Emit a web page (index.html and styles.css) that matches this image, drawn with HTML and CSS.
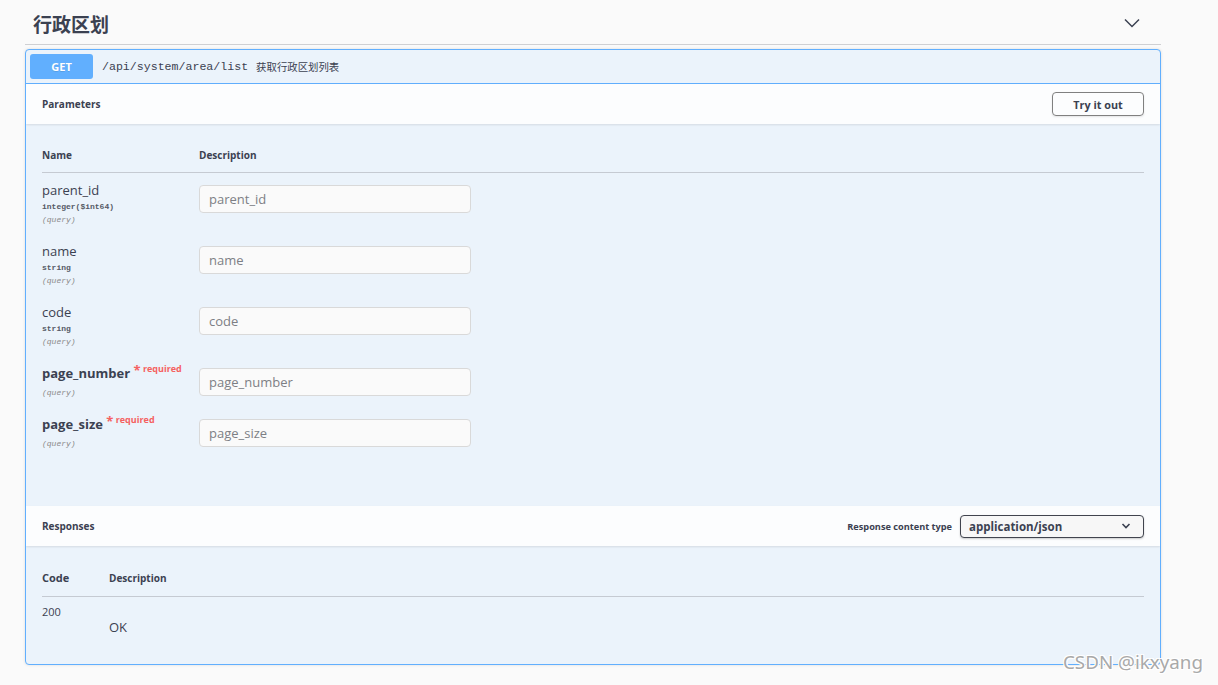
FILE: index.html
```html
<!DOCTYPE html>
<html lang="zh">
<head>
<meta charset="utf-8">
<title>行政区划</title>
<link rel="stylesheet" href="styles.css">
</head>
<body>
<div class="page">
  <div class="tag">
    <h3 class="tag-header">
      <span class="tag-title">行政区划</span>
      <svg class="tag-chevron" width="16" height="10" viewBox="0 0 16 10"><path d="M1 1.5 L8 8.5 L15 1.5" fill="none" stroke="#3b4151" stroke-width="1.5"/></svg>
    </h3>
    <div class="opblock">
      <div class="summary">
        <span class="method">GET</span>
        <span class="path">/api/system/area/list</span>
        <span class="summary-desc">获取行政区划列表</span>
      </div>

      <div class="section-header">
        <h4>Parameters</h4>
        <button class="try-btn">Try it out</button>
      </div>
      <div class="params-body">
        <table class="params">
          <thead>
            <tr><th class="col-name">Name</th><th>Description</th></tr>
          </thead>
          <tbody>
            <tr>
              <td class="p-name-cell"><div class="p-name">parent_id</div><div class="p-type">integer($int64)</div><div class="p-in">(query)</div></td>
              <td class="p-desc-cell"><input class="p-input" type="text" placeholder="parent_id"></td>
            </tr>
            <tr>
              <td class="p-name-cell"><div class="p-name">name</div><div class="p-type">string</div><div class="p-in">(query)</div></td>
              <td class="p-desc-cell"><input class="p-input" type="text" placeholder="name"></td>
            </tr>
            <tr>
              <td class="p-name-cell"><div class="p-name">code</div><div class="p-type">string</div><div class="p-in">(query)</div></td>
              <td class="p-desc-cell"><input class="p-input" type="text" placeholder="code"></td>
            </tr>
            <tr>
              <td class="p-name-cell"><div class="p-name required">page_number<span class="star">&nbsp;*</span><span class="req">&nbsp;required</span></div><div class="p-in p-in-gap">(query)</div></td>
              <td class="p-desc-cell"><input class="p-input" type="text" placeholder="page_number"></td>
            </tr>
            <tr>
              <td class="p-name-cell"><div class="p-name required">page_size<span class="star">&nbsp;*</span><span class="req">&nbsp;required</span></div><div class="p-in p-in-gap">(query)</div></td>
              <td class="p-desc-cell"><input class="p-input" type="text" placeholder="page_size"></td>
            </tr>
          </tbody>
        </table>
      </div>

      <div class="section-header">
        <h4>Responses</h4>
        <div class="content-type">
          <span class="ct-label">Response content type</span>
          <div class="ct-select">
            <span>application/json</span>
            <svg width="10" height="6" viewBox="0 0 10 6"><path d="M1.5 1 L5 4.5 L8.5 1" fill="none" stroke="#3b4151" stroke-width="1.6"/></svg>
          </div>
        </div>
      </div>
      <div class="responses-body">
        <table class="responses">
          <thead>
            <tr><th class="col-code">Code</th><th class="col-rdesc">Description</th></tr>
          </thead>
          <tbody>
            <tr>
              <td class="r-code">200</td>
              <td class="r-desc">OK</td>
            </tr>
          </tbody>
        </table>
      </div>
    </div>
  </div>
  <div class="watermark">CSDN @ikxyang</div>
</div>
</body>
</html>
```

FILE: styles.css
```css
* { box-sizing: border-box; }

html, body {
  margin: 0;
  padding: 0;
  background: #fafafa;
}

body {
  font-family: "Open Sans", "Noto Sans CJK SC", sans-serif;
  color: #3b4151;
  width: 1218px;
  height: 685px;
  overflow: hidden;
}

.page {
  position: relative;
  height: 685px;
  padding: 0 57px 0 25px;
}

.tag-header {
  margin: 0;
  height: 45px;
  padding: 3px 21px 0 8px;
  display: flex;
  align-items: center;
  justify-content: space-between;
  border-bottom: 1px solid #cfd0d3;
}

.tag-title {
  font-family: "Noto Sans CJK SC", sans-serif;
  font-size: 19px;
  font-weight: 700;
  color: #3b4151;
  line-height: 24px;
}

.tag-chevron { display: block; margin-top: -2px; }

.opblock {
  margin-top: 4px;
  border: 1px solid #61affe;
  border-radius: 4px;
  background: #ebf3fb;
  box-shadow: 0 0 3px rgba(0,0,0,.12);
  overflow: hidden;
}

.summary {
  height: 34px;
  padding: 4px 4px;
  display: flex;
  align-items: center;
  border-bottom: 1px solid #61affe;
}

.method {
  width: 63px;
  height: 25px;
  border-radius: 3px;
  background: #61affe;
  color: #fff;
  font-size: 11px;
  font-weight: 700;
  display: flex;
  align-items: center;
  justify-content: center;
  text-shadow: 0 1px 0 rgba(0,0,0,.1);
}

.path {
  margin-left: 9px;
  font-family: "Liberation Mono", "DejaVu Sans Mono", monospace;
  font-size: 11.6px;
  color: #3b4151;
}

.summary-desc {
  margin-left: 8px;
  font-family: "Noto Sans CJK SC", sans-serif;
  font-size: 10.4px;
  color: #3b4151;
}

.section-header {
  height: 40px;
  padding: 0 16px;
  display: flex;
  align-items: center;
  justify-content: space-between;
  background: #fcfdfe;
  box-shadow: 0 1px 2px rgba(0,0,0,.1);
  position: relative;
}

.section-header h4 {
  margin: 0;
  font-size: 10px;
  font-weight: 700;
  color: #3b4151;
}

.try-btn {
  width: 92px;
  height: 24px;
  margin-right: 0;
  background: transparent;
  border: 1.5px solid #808080;
  border-radius: 4px;
  font-family: "Open Sans", sans-serif;
  font-size: 10.8px;
  font-weight: 700;
  color: #3b4151;
  box-shadow: 0 1px 2px rgba(0,0,0,.1);
  padding: 0;
}

.params-body {
  padding: 21px 16px 48px;
}

table {
  width: 100%;
  border-collapse: collapse;
}

th {
  text-align: left;
  font-size: 10px;
  font-weight: 700;
  line-height: 14px;
  padding: 3px 0 10px;
  border-bottom: 1px solid #c5cad2;
  color: #3b4151;
}

.col-name { width: 157px; }

td { vertical-align: top; padding: 0; }

.p-name-cell { padding: 9px 0 8px; }
.p-desc-cell { padding-top: 12px; }

.p-name {
  font-size: 13px;
  line-height: 16px;
  height: 16px;
  color: #3b4151;
  white-space: nowrap;
}

.p-name.required { font-weight: 700; }

.star {
  color: #f56161;
  font-weight: 700;
  line-height: 0;
  position: relative;
  top: -3px;
}

.req {
  color: #f56161;
  font-size: 9px;
  font-weight: 700;
  line-height: 0;
  position: relative;
  top: -6px;
}

.p-type {
  margin-top: 2px;
  font-family: "Liberation Mono", "DejaVu Sans Mono", monospace;
  font-size: 8px;
  font-weight: 700;
  line-height: 13px;
  color: #555a66;
}

.p-in {
  font-family: "Liberation Mono", "DejaVu Sans Mono", monospace;
  font-size: 8px;
  font-style: italic;
  line-height: 13px;
  color: #8a8a8a;
}

.p-in-gap { margin-top: 5px; }

.p-input {
  display: block;
  width: 272px;
  height: 28px;
  margin: 0;
  padding: 0 9px;
  background: #fafafa;
  border: 1px solid #d9d9d9;
  border-radius: 4px;
  font-family: "Open Sans", sans-serif;
  font-size: 13px;
  color: #3b4151;
}

.p-input::placeholder { color: #7d7f85; }

.content-type {
  display: flex;
  align-items: center;
}

.ct-label {
  font-size: 9.2px;
  font-weight: 700;
  margin-right: 8px;
}

.ct-select {
  width: 184px;
  height: 23px;
  border: 1.5px solid #41444e;
  border-radius: 4px;
  background: #f7f7f7;
  box-shadow: 0 1px 2px rgba(0,0,0,.2);
  display: flex;
  align-items: center;
  justify-content: space-between;
  padding: 0 12px 0 8px;
  font-size: 11.5px;
  font-weight: 700;
  color: #3b4151;
}

.responses-body {
  padding: 22px 16px 29px;
}

.responses th { padding: 3px 0 11px; }

.col-code { width: 67px; font-size: 11px; }

.r-code {
  padding-top: 7px;
  font-size: 11px;
  line-height: 16px;
}

.r-desc {
  padding-top: 22px;
  font-size: 13px;
  line-height: 16px;
}

.watermark {
  position: absolute;
  left: 1063px;
  top: 649px;
  font-family: "Noto Sans", "Open Sans", sans-serif;
  font-size: 18.8px;
  color: #a9a9a9;
  text-shadow: 1px 1px 0 #fff, -1px -1px 0 #fff, 1px -1px 0 #fff, -1px 1px 0 #fff;
  white-space: nowrap;
}
```
